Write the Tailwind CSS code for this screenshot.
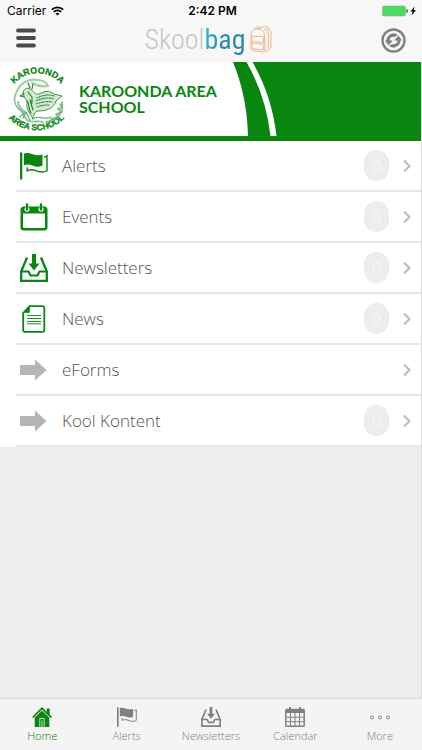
<!DOCTYPE html>
<html lang="en">
<head>
<meta charset="utf-8">
<meta name="viewport" content="width=device-width, initial-scale=1">
<title>Skoolbag</title>
<script src="https://cdn.jsdelivr.net/npm/@tailwindcss/browser@4"></script>
</head>
<body class="min-h-screen flex flex-col bg-[#ededed] font-['Open_Sans',sans-serif] font-light text-[#555]">

<!-- Icons shared by the menu and the tab bar -->
<svg class="hidden" aria-hidden="true">
  <symbol id="flag" viewBox="0 0 28 28">
    <path d="M0 .5h2.300v27H0z" fill="currentColor"/>
    <path d="M4 1.500c3-1.300 6-.3 9 .8s6 1.400 9.500.2v11c-3.500 1.800-6.500 1.300-9.500.2s-6-1.700-9-.4z" fill="currentColor"/>
    <path d="M23.800 5.500l3.200-1.800v15c-3.500 2.200-7 1.500-10.500.2-3.300-1.300-6-1.800-9.300-.1v-3.500" fill="none" stroke="currentColor" stroke-width="1.400"/>
  </symbol>
  <symbol id="event" viewBox="0 0 28 28">
    <path fill="currentColor" fill-rule="evenodd" d="M4 3.500h20a3.500 3.500 0 0 1 3.500 3.500v17.500a3 3 0 0 1-3 3h-21a3 3 0 0 1-3-3V7A3.500 3.500 0 0 1 4 3.500zM3 10.500v13.500a1 1 0 0 0 1 1h20a1 1 0 0 0 1-1V10.500z"/>
    <circle cx="7" cy="6.300" r="2.500" fill="#fff"/><circle cx="21" cy="6.300" r="2.500" fill="#fff"/>
    <path d="M7 1.500v5M21 1.500v5" stroke="currentColor" stroke-width="2.400" stroke-linecap="round"/>
  </symbol>
  <symbol id="inbox" viewBox="0 0 28 28">
    <path d="M7 3.500L1.200 17.500v9.300h25.600v-9.300L21 3.500" fill="none" stroke="currentColor" stroke-width="2.300"/>
    <path d="M1 17.500h7.500l2 4h7l2-4H27" fill="none" stroke="currentColor" stroke-width="2.200"/>
    <path d="M12 0h4v9.500h3.500L14 16.500 8.500 9.500H12z" fill="currentColor"/>
  </symbol>
  <symbol id="page" viewBox="0 0 28 28">
    <path d="M9.500 1.200h13a1.800 1.800 0 0 1 1.800 1.800v22a1.800 1.800 0 0 1-1.800 1.800H5A1.800 1.800 0 0 1 3.200 25V8z" fill="none" stroke="currentColor" stroke-width="1.800"/>
    <path d="M9.800 1v6.800H3z" fill="currentColor"/>
    <path d="M7 10.500h14M7 13.500h14M7 16.500h14M7 18.800h14" stroke="currentColor" stroke-width=".9"/>
  </symbol>
  <symbol id="arrow" viewBox="0 0 28 28">
    <path d="M0 9h15V3.500L26.500 14 15 24.500V19H0z" fill="currentColor"/>
  </symbol>
  <symbol id="chevron" viewBox="0 0 8 14">
    <path d="M1 1.500L6.500 7 1 12.500" fill="none" stroke="currentColor" stroke-width="2.200"/>
  </symbol>
  <symbol id="home" viewBox="0 0 20 20">
    <path d="M10 0L0 10l1.200 1L10 2.600l8.800 8.400 1.200-1-2.300-2.400V1.500h-3v3.200z" fill="currentColor"/>
    <path d="M10 3.600l-7.300 7V20h14.600v-9.400z" fill="currentColor"/>
    <path d="M7.800 20v-8.500h4.400V20M10 13.500V20" fill="none" stroke="#f4f4f4" stroke-width=".8"/>
  </symbol>
  <symbol id="calendar" viewBox="0 0 20 20">
    <rect x=".8" y="2.500" width="18.400" height="16.700" rx="1" fill="none" stroke="currentColor" stroke-width="1.500"/>
    <path d="M.5 2.500h19V6H.5z" fill="currentColor"/>
    <path d="M5 0v3M15 0v3" stroke="currentColor" stroke-width="2"/>
    <path d="M5.500 6v13M10 6v13M14.500 6v13M1 10.200h18M1 14.700h18" stroke="currentColor" stroke-width="1"/>
  </symbol>
  <symbol id="more" viewBox="0 0 20 20">
    <g fill="none" stroke="currentColor" stroke-width="1"><circle cx="2" cy="10.500" r="1.500"/><circle cx="10" cy="10.500" r="1.500"/><circle cx="18" cy="10.500" r="1.500"/></g>
  </symbol>
</svg>

<header class="bg-[#f7f7f7]">
  <div class="grid grid-cols-3 items-center h-[22px] pl-[7px] pr-1 font-['Inter',sans-serif] text-[12px] font-normal text-black">
    <div class="flex items-center gap-[5px]">
      <span>Carrier</span>
      <svg class="w-[13px] h-[10px]" viewBox="0 0 13 10" fill="none" stroke="#000" stroke-width="1.700" aria-hidden="true">
        <path d="M.8 3.600a8.200 8.200 0 0 1 11.400 0M2.800 5.800a5.300 5.300 0 0 1 7.400 0"/><path d="M6.500 9.500L4.500 7.600a2.900 2.900 0 0 1 4 0z" fill="#000" stroke="none"/>
      </svg>
    </div>
    <span class="text-center font-semibold">2:42 PM</span>
    <svg class="justify-self-end w-[36px] h-[12px]" viewBox="0 0 36 12" aria-label="Battery charging">
      <rect x=".5" y="1" width="23" height="10" rx="1.500" fill="#4cd964" stroke="#83b58c" stroke-width=".6"/>
      <path d="M24.500 4c1.800.5 1.800 3.500 0 4z" fill="#333"/>
      <path d="M32.500 1.500L28.500 6.500h2.200L29.500 10.500l4.500-5.300h-2.300z" fill="#000"/>
    </svg>
  </div>
  <div class="flex items-center justify-between h-10 px-4">
    <button type="button" aria-label="Menu" class="w-5 h-5 mb-2">
      <svg class="w-5 h-5" viewBox="0 0 20 20" stroke="#4a4a4a" stroke-width="3.800" stroke-linecap="round"><path d="M2 2.500h16M2 10h16M2 17.500h16"/></svg>
    </button>
    <h1 class="flex items-center gap-[3px] mb-1 font-['Roboto_Condensed','Liberation_Sans',sans-serif] text-[28px] leading-8 font-normal">
      <span class="text-[#c6c6c6] font-light">Skool<span class="font-normal bg-linear-to-r from-[#2cb5d0] to-[#2a86b0] to-40% bg-clip-text text-transparent">bag</span></span>
      <svg class="w-[24px] h-[28px]" viewBox="0 0 24 28" fill="none" stroke="#efb583" stroke-width="1" aria-hidden="true">
        <path d="M2 23V9c0-4 2-6 6.500-6S15 5 15.500 9l.5 15c0 1.500-.8 2-2 2L4 24.500c-1.500-.2-2-.7-2-1.500z"/>
        <path d="M15 4c4-2 7-.8 7 3v14c0 2-3 3.500-6 4.500M6 3c0-3 5-3 5 0M2 10l13.500 1M3 11v4.500l11.500 1V12M1 17l15 1.500M3 18v4.500l11.500 1.500v-4.500M18 4.500c2 3 1.500 9 1 18M8 3c5-3 10-2.500 12-1"/>
      </svg>
    </h1>
    <button type="button" aria-label="Refresh" class="w-[25px] h-[25px] mb-1">
      <svg class="w-[25px] h-[25px]" viewBox="0 0 25 25">
        <circle cx="12.500" cy="12.500" r="11" fill="none" stroke="#808080" stroke-width="2.400"/>
        <path d="M12 7.200a5.700 5.700 0 0 0-5 6.300M13 17.800a5.700 5.700 0 0 0 5-6.300" fill="none" stroke="#808080" stroke-width="3.200"/>
        <path d="M4 12.500h7.800l-4.200 5zM21 12.500h-7.800l4.200-5z" fill="#808080"/>
        <path d="M11 5.800c2-.7 4-.3 5.500.9l-1.500 1.700-4 .5zM14 19.200c-2 .7-4 .3-5.500-.9l1.500-1.700 4-.5z" fill="#808080"/>
      </svg>
    </button>
  </div>
</header>

<main class="flex-1 border-r border-[#dcdcdc]">
  <section class="flex bg-white border-b-[5px] border-[#088610] h-[79px]">
    <div class="flex items-center flex-1 min-w-0 gap-2 pl-1">
      <svg class="w-[67px] h-[70px] shrink-0" viewBox="0 0 67 70" role="img" aria-label="Karoonda Area School emblem">
        <defs><path id="arcTop" d="M8.500 22A31 31 0 0 1 58.500 22"/><path id="arcBottom" d="M2 51A38 38 0 0 0 63 51"/></defs>
        <g fill="#088610" stroke="#088610" stroke-width=".3" font-family="Liberation Sans, sans-serif" font-weight="700">
          <text font-size="9" text-anchor="middle"><textPath href="#arcTop" startOffset="50%">KAROONDA</textPath></text>
          <text font-size="8.500" text-anchor="middle"><textPath href="#arcBottom" startOffset="50%">AREA SCHOOL</textPath></text>
        </g>
        <g fill="none" stroke-linecap="round" stroke-linejoin="round">
          <path d="M12 30C15 19 25 14 34 16c5 0 9 3 10 6-6 1-11 0-16-3" stroke="#a5cca7" stroke-width="2.200"/>
          <path d="M11 31c-2 9 2 13 6 16s3 8 8 10 9-1 14 1M14 38c1 7 5 8 8 11" stroke="#8fc293" stroke-width="1.800"/>
          <path d="M58 38c2 9-2 17-16 20M56 40l2 3-4 2 4 3-6 2 2 3-7 2" stroke="#7db681" stroke-width="1.600"/>
          <path d="M19 54l3-6 4 8M16 53l4-4M29 55c5-5 10 2 18-2" stroke="#64a969" stroke-width="1.200"/>
          <path d="M19 29c0-4 4-6 7-4 4 2 5 6 9 5 6-3 10-4 15 0l8 2-6 5c-2 7-9 10-18 10-3 0-5 5-5 8-3-6-7-10-6-15 1-4-3-5-4-11z" fill="#d5e8d6" stroke="#3d9743" stroke-width="1"/>
          <path d="M33 34c6-3 12-4 17-2M32 37c6-3 13-4 18-2M32 40c6-2 11-3 16-2M33 43c4-2 9-2 12-2" stroke="#2f9035" stroke-width="1.100" stroke-dasharray="1.500 1.200"/>
          <path d="M20 30l-4 2 4 1M24 28l4 5v6M23 37c3 3 1 8 4 12M26 36l3 10M26 24l-2-5M28 25l1-5" stroke="#1c8a24" stroke-width="1.200"/>
        </g>
      </svg>
      <h2 class="font-['Lato',sans-serif] font-bold text-[16px] leading-4 text-[#088610]"><span class="block">KAROONDA AREA</span><span class="block">SCHOOL</span></h2>
    </div>
    <svg class="w-[188px] h-[74px] shrink-0" viewBox="0 0 188 74" preserveAspectRatio="none" aria-hidden="true">
      <path d="M0 0h188v74H15Q14 34 0 0z" fill="#088610"/>
      <path d="M13.500 0h6Q39 34 43.500 74h-6Q33 34 13.500 0z" fill="#fff"/>
    </svg>
  </section>

  <nav aria-label="School menu" class="bg-white text-[17px] leading-6">
    <ul>
      <li class="pl-4"><a href="#alerts" class="flex items-center h-[51px] pl-1 pr-[10px] border-b-2 border-[#e7e7e7]"><svg class="w-7 h-7 mr-[14px] text-[#088610]"><use href="#flag"/></svg><span class="flex-1">Alerts</span><span class="grid place-items-center w-[25px] h-[31px] mr-[14px] rounded-full bg-[#ededed] text-[#f7f7f7] font-normal text-base">0</span><svg class="w-2 h-[14px] text-[#bdbdbd]"><use href="#chevron"/></svg></a></li>
      <li class="pl-4"><a href="#events" class="flex items-center h-[51px] pl-1 pr-[10px] border-b-2 border-[#e7e7e7]"><svg class="w-7 h-7 mr-[14px] text-[#088610]"><use href="#event"/></svg><span class="flex-1">Events</span><span class="grid place-items-center w-[25px] h-[31px] mr-[14px] rounded-full bg-[#ededed] text-[#f7f7f7] font-normal text-base">0</span><svg class="w-2 h-[14px] text-[#bdbdbd]"><use href="#chevron"/></svg></a></li>
      <li class="pl-4"><a href="#newsletters" class="flex items-center h-[51px] pl-1 pr-[10px] border-b-2 border-[#e7e7e7]"><svg class="w-7 h-7 mr-[14px] text-[#088610]"><use href="#inbox"/></svg><span class="flex-1">Newsletters</span><span class="grid place-items-center w-[25px] h-[31px] mr-[14px] rounded-full bg-[#ededed] text-[#f7f7f7] font-normal text-base">0</span><svg class="w-2 h-[14px] text-[#bdbdbd]"><use href="#chevron"/></svg></a></li>
      <li class="pl-4"><a href="#news" class="flex items-center h-[51px] pl-1 pr-[10px] border-b-2 border-[#e7e7e7]"><svg class="w-7 h-7 mr-[14px] text-[#088610]"><use href="#page"/></svg><span class="flex-1">News</span><span class="grid place-items-center w-[25px] h-[31px] mr-[14px] rounded-full bg-[#ededed] text-[#f7f7f7] font-normal text-base">0</span><svg class="w-2 h-[14px] text-[#bdbdbd]"><use href="#chevron"/></svg></a></li>
      <li class="pl-4"><a href="#eforms" class="flex items-center h-[51px] pl-1 pr-[10px] border-b-2 border-[#e7e7e7]"><svg class="w-7 h-7 mr-[14px] text-[#b5b5b5]"><use href="#arrow"/></svg><span class="flex-1">eForms</span><svg class="w-2 h-[14px] text-[#bdbdbd]"><use href="#chevron"/></svg></a></li>
      <li class="pl-4"><a href="#kool-kontent" class="flex items-center h-[51px] pl-1 pr-[10px] border-b-2 border-[#e7e7e7]"><svg class="w-7 h-7 mr-[14px] text-[#b5b5b5]"><use href="#arrow"/></svg><span class="flex-1">Kool Kontent</span><span class="grid place-items-center w-[25px] h-[31px] mr-[14px] rounded-full bg-[#ededed] text-[#f7f7f7] font-normal text-base">0</span><svg class="w-2 h-[14px] text-[#bdbdbd]"><use href="#chevron"/></svg></a></li>
    </ul>
  </nav>
</main>

<nav aria-label="Tabs" class="grid grid-cols-5 h-[52px] pt-2 border-t border-[#d9d9d9] bg-[#f4f4f4] text-[11px] leading-4 text-[#808080]">
  <a href="#home" aria-current="page" class="flex flex-col items-center gap-px text-[#088610]"><svg class="w-5 h-5"><use href="#home"/></svg>Home</a>
  <a href="#alerts" class="flex flex-col items-center gap-px"><svg class="w-5 h-5"><use href="#flag"/></svg>Alerts</a>
  <a href="#newsletters" class="flex flex-col items-center gap-px"><svg class="w-5 h-5"><use href="#inbox"/></svg>Newsletters</a>
  <a href="#calendar" class="flex flex-col items-center gap-px"><svg class="w-5 h-5"><use href="#calendar"/></svg>Calendar</a>
  <a href="#more" class="flex flex-col items-center gap-px"><svg class="w-5 h-5"><use href="#more"/></svg>More</a>
</nav>
</body>
</html>
